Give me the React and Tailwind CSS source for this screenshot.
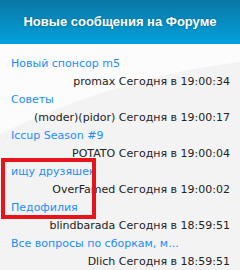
import React from "react";

const posts = [
  { title: "Новый спонсор m5", author: "promax", time: "Сегодня в 19:00:34" },
  { title: "Советы", author: "(moder)(pidor)", time: "Сегодня в 19:00:17" },
  { title: "Iccup Season #9", author: "POTATO", time: "Сегодня в 19:00:04" },
  { title: "ищу друзяшек", author: "OverFamed", time: "Сегодня в 19:00:02" },
  { title: "Педофилия", author: "blindbarada", time: "Сегодня в 18:59:51" },
  { title: "Все вопросы по сборкам, м...", author: "Dlich", time: "Сегодня в 18:59:51" },
];

export default function App() {
  return (
    <div className="w-[240px] h-[270px] overflow-hidden bg-[#f3f3f3] font-['DejaVu_Sans',sans-serif]">
      {/* Header */}
      <div className="h-[44px] flex items-center justify-center bg-gradient-to-b from-[#0a77a4] to-[#01a2dd]">
        <h2 className="text-[13px] font-bold text-white font-['Liberation_Sans',sans-serif] [text-shadow:0_0_2px_rgba(0,60,100,0.6)]">
          Новые сообщения на Форуме
        </h2>
      </div>

      {/* List */}
      <div className="relative pt-[11px]">
        <svg className="absolute inset-0 w-full h-full" viewBox="0 0 240 226" preserveAspectRatio="none">
          <path d="M0 0 H240 V18 C170 26 80 50 0 90 Z" fill="#fcfcfc" />
        </svg>

        <div className="relative">
          {posts.map((p) => (
            <div key={p.title + p.author}>
              <div className="h-[18px] pl-[11px] text-[11px] leading-[18px] text-[#1a8cff] whitespace-nowrap">{p.title}</div>
              <div className="h-[18px] pr-[10px] text-right text-[11px] leading-[18px] text-[#222] whitespace-nowrap">
                {p.author} {p.time}
              </div>
            </div>
          ))}
        </div>

        {/* annotation */}
        <div className="absolute left-[1px] top-[114px] w-[95px] h-[61px] border-4 border-[#e8141c]" />
      </div>
    </div>
  );
}
